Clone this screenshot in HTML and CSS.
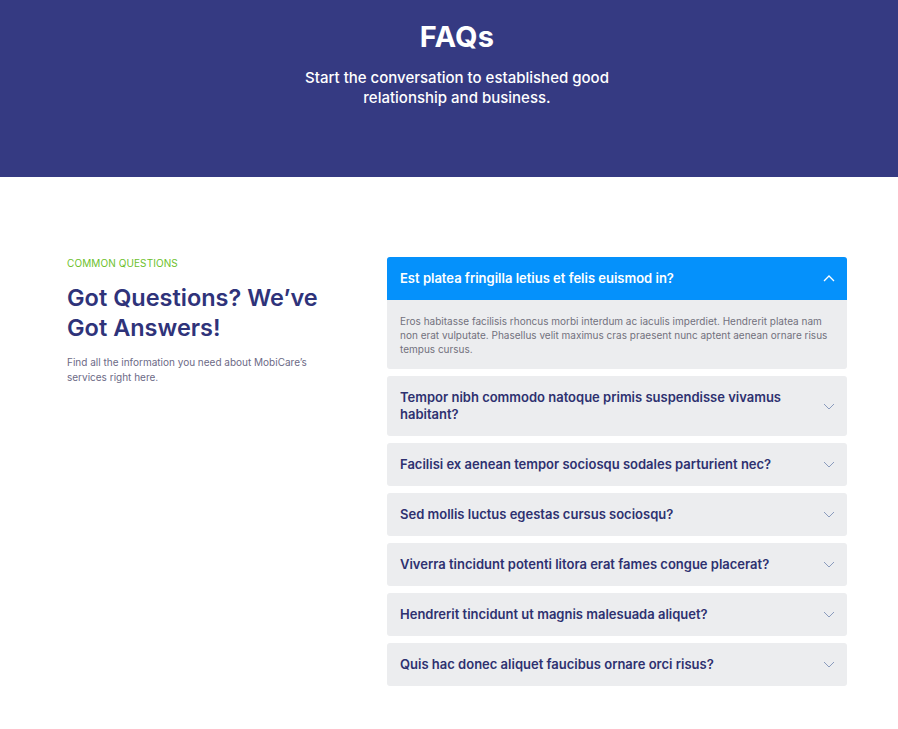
FILE: index.html
```html
<!DOCTYPE html>
<html lang="en">
<head>
<meta charset="utf-8">
<title>FAQs</title>
<link rel="stylesheet" href="styles.css">
</head>
<body>
<header class="hero">
  <h1 class="hero-title">FAQs</h1>
  <p class="hero-sub">Start the conversation to established good<br>relationship and business.</p>
</header>
<main class="faq">
  <section class="intro">
    <div class="eyebrow">COMMON QUESTIONS</div>
    <h2 class="intro-title">Got Questions? We’ve Got Answers!</h2>
    <p class="intro-text">Find all the information you need about MobiCare’s services right here.</p>
  </section>
  <section class="accordion">
    <div class="item open">
      <div class="q"><span>Est platea fringilla letius et felis euismod in?</span>
        <svg class="chev" viewBox="0 0 12 7" width="12" height="7"><path d="M1 6 L6 1 L11 6" fill="none" stroke="currentColor" stroke-width="1.3"/></svg></div>
      <div class="a">Eros habitasse facilisis rhoncus morbi interdum ac iaculis imperdiet. Hendrerit platea nam non erat vulputate. Phasellus velit maximus cras praesent nunc aptent aenean ornare risus tempus cursus.</div>
    </div>
    <div class="item">
      <div class="q"><span>Tempor nibh commodo natoque primis suspendisse vivamus habitant?</span>
        <svg class="chev" viewBox="0 0 12 7" width="12" height="7"><path d="M1 1 L6 6 L11 1" fill="none" stroke="currentColor" stroke-width="1"/></svg></div>
    </div>
    <div class="item">
      <div class="q"><span>Facilisi ex aenean tempor sociosqu sodales parturient nec?</span>
        <svg class="chev" viewBox="0 0 12 7" width="12" height="7"><path d="M1 1 L6 6 L11 1" fill="none" stroke="currentColor" stroke-width="1"/></svg></div>
    </div>
    <div class="item">
      <div class="q"><span>Sed mollis luctus egestas cursus sociosqu?</span>
        <svg class="chev" viewBox="0 0 12 7" width="12" height="7"><path d="M1 1 L6 6 L11 1" fill="none" stroke="currentColor" stroke-width="1"/></svg></div>
    </div>
    <div class="item">
      <div class="q"><span>Viverra tincidunt potenti litora erat fames congue placerat?</span>
        <svg class="chev" viewBox="0 0 12 7" width="12" height="7"><path d="M1 1 L6 6 L11 1" fill="none" stroke="currentColor" stroke-width="1"/></svg></div>
    </div>
    <div class="item">
      <div class="q"><span>Hendrerit tincidunt ut magnis malesuada aliquet?</span>
        <svg class="chev" viewBox="0 0 12 7" width="12" height="7"><path d="M1 1 L6 6 L11 1" fill="none" stroke="currentColor" stroke-width="1"/></svg></div>
    </div>
    <div class="item">
      <div class="q"><span>Quis hac donec aliquet faucibus ornare orci risus?</span>
        <svg class="chev" viewBox="0 0 12 7" width="12" height="7"><path d="M1 1 L6 6 L11 1" fill="none" stroke="currentColor" stroke-width="1"/></svg></div>
    </div>
  </section>
</main>
</body>
</html>
```
FILE: styles.css
```css
* { box-sizing: border-box; }
html, body { margin: 0; padding: 0; background: #fff; }
body { font-family: "Inter", "Noto Sans", sans-serif; }

.hero {
  background: #353a82;
  height: 177px;
  padding: 19px 0 0 16px;
  text-align: center;
  color: #fff;
}
.hero-title {
  margin: 0;
  font-size: 29px;
  line-height: 36px;
  font-weight: 700;
  letter-spacing: 0.2px;
}
.hero-sub {
  margin: 13px 0 0;
  font-size: 15px;
  line-height: 20px;
  font-weight: 500;
}

.faq {
  display: flex;
  padding: 80px 51px 40px 67px;
}
.intro {
  width: 320px;
  flex: none;
}
.eyebrow {
  margin-top: -1px;
  font-size: 10px;
  line-height: 14px;
  color: #6cbf2c;
  letter-spacing: 0.1px;
}
.intro-title {
  margin: 13px 0 0;
  font-size: 23.5px;
  line-height: 30px;
  font-weight: 600;
  color: #2f337a;
  width: 270px;
  letter-spacing: 0;
}
.intro-text {
  margin: 12px 0 0;
  font-size: 10px;
  line-height: 15px;
  color: #6c6a86;
  width: 260px;
}

.accordion {
  width: 460px;
  flex: none;
  display: flex;
  flex-direction: column;
  gap: 7px;
}
.item {
  background: #ecedef;
  border-radius: 3px;
  overflow: hidden;
}
.q {
  display: flex;
  align-items: center;
  justify-content: space-between;
  min-height: 43px;
  padding: 13px 13px;
  font-size: 13px;
  line-height: 17px;
  font-weight: 600;
  color: #2e3170;
}
.q span { max-width: 400px; }
.chev { color: #8a9bbd; flex: none; margin-right: -1px; }
.item.open .q {
  background: #0591fb;
  color: #fff;
}
.item.open .chev { color: #fff; }
.a {
  padding: 14px 13px 13px;
  font-size: 10px;
  line-height: 14px;
  color: #72717d;
}
```
